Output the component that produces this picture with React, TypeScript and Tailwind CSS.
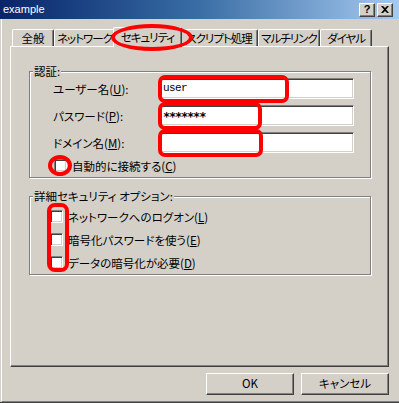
import React from 'react';

const raised =
  'border border-t-white border-l-white border-r-[#404040] border-b-[#404040] shadow-[inset_-1px_-1px_0_#808080]';
const sunken =
  'border border-t-[#808080] border-l-[#808080] border-r-white border-b-white shadow-[inset_1px_1px_0_#404040,inset_-1px_-1px_0_#d4d0c8]';
const etched = 'border border-[#808080] shadow-[inset_1px_1px_0_#fff,1px_1px_0_#fff]';
const ring = 'absolute border-[4px] border-[#ff0000] pointer-events-none';

const tabs = [
  { label: '全般', w: 'w-[42px]', tight: false },
  { label: 'ネットワーク', w: 'w-[61px]', tight: true },
  { label: 'セキュリティ', w: 'w-[69px]', tight: true, active: true },
  { label: 'スクリプト処理', w: 'w-[78px]', tight: true },
  { label: 'マルチリンク', w: 'w-[62px]', tight: true },
  { label: 'ダイヤル', w: 'w-[52px]', tight: true },
];

function Key({ k }: { k: string }) {
  return (
    <>
      (<span className="underline">{k}</span>)
    </>
  );
}

function Checkbox() {
  return <div className={`w-[13px] h-[13px] bg-white shrink-0 ${sunken}`} />;
}

function FieldRow({
  label,
  k,
  value,
  password,
  ringWidth,
}: {
  label: string;
  k: string;
  value?: string;
  password?: boolean;
  ringWidth: string;
}) {
  return (
    <div className="flex items-center h-[21px]">
      <div className="w-[107px] leading-[12px] whitespace-nowrap">
        {label}
        <Key k={k} />:
      </div>
      <div className={`relative w-[194px] h-[21px] bg-white flex items-center pl-[2px] ${sunken}`}>
        {password ? (
          <span className="font-['DejaVu_Sans_Mono',monospace] font-bold text-[12px] tracking-[-1.2px] leading-none pt-[2px]">
            {value}
          </span>
        ) : (
          <span className="font-['Liberation_Mono',monospace] text-[11px] tracking-[-0.6px] leading-none">{value}</span>
        )}
        <div className={`${ring} -left-[3px] -top-[4px] h-[28px] rounded-[7px] ${ringWidth}`} />
      </div>
    </div>
  );
}

function Group({ title, height, children }: { title: string; height: string; children: React.ReactNode }) {
  return (
    <div className={`flex flex-col w-[342px] ${height} ${etched}`}>
      <div className="-mt-[7px] ml-[3px] self-start px-[1px] bg-[#d4d0c8] h-[12px] leading-[12px] whitespace-nowrap">
        {title}
      </div>
      {children}
    </div>
  );
}

export default function App() {
  return (
    <div className="w-[399px] h-[403px] bg-[#d4d0c8] flex flex-col overflow-hidden text-black text-[11.5px] font-['Noto_Sans_CJK_JP',sans-serif] [font-feature-settings:'palt']">
      {/* title bar */}
      <div className="h-[19px] shrink-0 flex items-center justify-between pl-[3px] pr-[6px] bg-linear-to-r from-[#0a246a] via-[#3a6ea5] to-[#a6caf0]">
        <span className="text-white text-[11px] font-['Liberation_Sans',sans-serif]">example</span>
        <div className="flex gap-[2px]">
          <div className={`w-[16px] h-[14px] bg-[#d4d0c8] flex items-center justify-center ${raised}`}>
            <span className="font-['Liberation_Sans',sans-serif] font-bold text-[11px] leading-none">?</span>
          </div>
          <div className={`w-[16px] h-[14px] bg-[#d4d0c8] flex items-center justify-center ${raised}`}>
            <svg width="8" height="7" viewBox="0 0 8 7">
              <path d="M0 0h2l2 2 2-2h2L5 3.5 8 7H6L4 5 2 7H0l3-3.5z" fill="#000" />
            </svg>
          </div>
        </div>
      </div>

      {/* body */}
      <div className="flex-1 flex flex-col border-b border-b-[#404040]">
        <div className="flex-1 flex flex-col ml-[1px] border-l border-l-white border-b border-b-[#808080] pl-[8px] pt-[8px]">
          {/* tabs */}
          <div className="flex items-end h-[19px] pl-[2px]">
            {tabs.map((t) =>
              t.active ? (
                <div
                  key={t.label}
                  className={`relative z-10 -mx-[2px] -mb-[1px] h-[20px] bg-[#d4d0c8] flex justify-center pt-[2px] rounded-t-[2px] border-t border-l border-r border-t-white border-l-white border-r-[#404040] shadow-[inset_-1px_0_0_#808080] ${t.w}`}
                >
                  <span className="leading-[14px] whitespace-nowrap tracking-[-1px]">{t.label}</span>
                  <div className={`${ring} -left-[3px] -top-[4px] w-[82px] h-[27px] rounded-[50%]`} />
                </div>
              ) : (
                <div
                  key={t.label}
                  className={`h-[17px] flex items-center justify-center overflow-hidden rounded-t-[2px] border-t border-l border-r border-t-white border-l-white border-r-[#404040] shadow-[inset_-1px_0_0_#808080] ${t.w}`}
                >
                  <span className={`leading-[12px] whitespace-nowrap ${t.tight ? 'tracking-[-1px]' : ''}`}>
                    {t.label}
                  </span>
                </div>
              )
            )}
          </div>

          {/* panel */}
          <div className={`w-[379px] h-[321px] flex flex-col pl-[18px] pt-[24px] ${raised}`}>
            <Group title="認証:" height="h-[107px]">
              <div className="flex flex-col gap-[6px] mt-[1px] pl-[23px]">
                <FieldRow label="ユーザー名" k="U" value="user" ringWidth="w-[131px]" />
                <FieldRow label="パスワード" k="P" value="*******" password ringWidth="w-[104px]" />
                <FieldRow label="ドメイン名" k="M" ringWidth="w-[105px]" />
                <div className="flex items-center gap-[5px] h-[13px] ml-[1px]">
                  <div className="relative">
                    <Checkbox />
                    <div className={`${ring} -left-[6px] -top-[4px] w-[24px] h-[21px] rounded-[50%]`} />
                  </div>
                  <span className="leading-[12px] whitespace-nowrap">
                    自動的に接続する<Key k="C" />
                  </span>
                </div>
              </div>
            </Group>

            <div className="mt-[18px]">
              <Group title="詳細セキュリティ オプション:" height="h-[79px]">
                <div className="relative flex flex-col gap-[10px] mt-[8px] pl-[20px]">
                  {[
                    ['ネットワークへのログオン', 'L'],
                    ['暗号化パスワードを使う', 'E'],
                    ['データの暗号化が必要', 'D'],
                  ].map(([label, k]) => (
                    <div key={k} className="flex items-center gap-[5px] h-[13px]">
                      <Checkbox />
                      <span className="leading-[12px] whitespace-nowrap">
                        {label}
                        <Key k={k} />
                      </span>
                    </div>
                  ))}
                  <div className={`${ring} left-[17px] -top-[7px] w-[22px] h-[69px] rounded-[8px]`} />
                </div>
              </Group>
            </div>
          </div>

          {/* buttons */}
          <div className="flex justify-end gap-[7px] mt-[6px] w-[379px]">
            <button className={`w-[88px] h-[22px] bg-[#d4d0c8] flex items-center justify-center ${raised}`}>OK</button>
            <button className={`w-[88px] h-[22px] bg-[#d4d0c8] flex items-center justify-center ${raised}`}>
              キャンセル
            </button>
          </div>
        </div>
      </div>
    </div>
  );
}
